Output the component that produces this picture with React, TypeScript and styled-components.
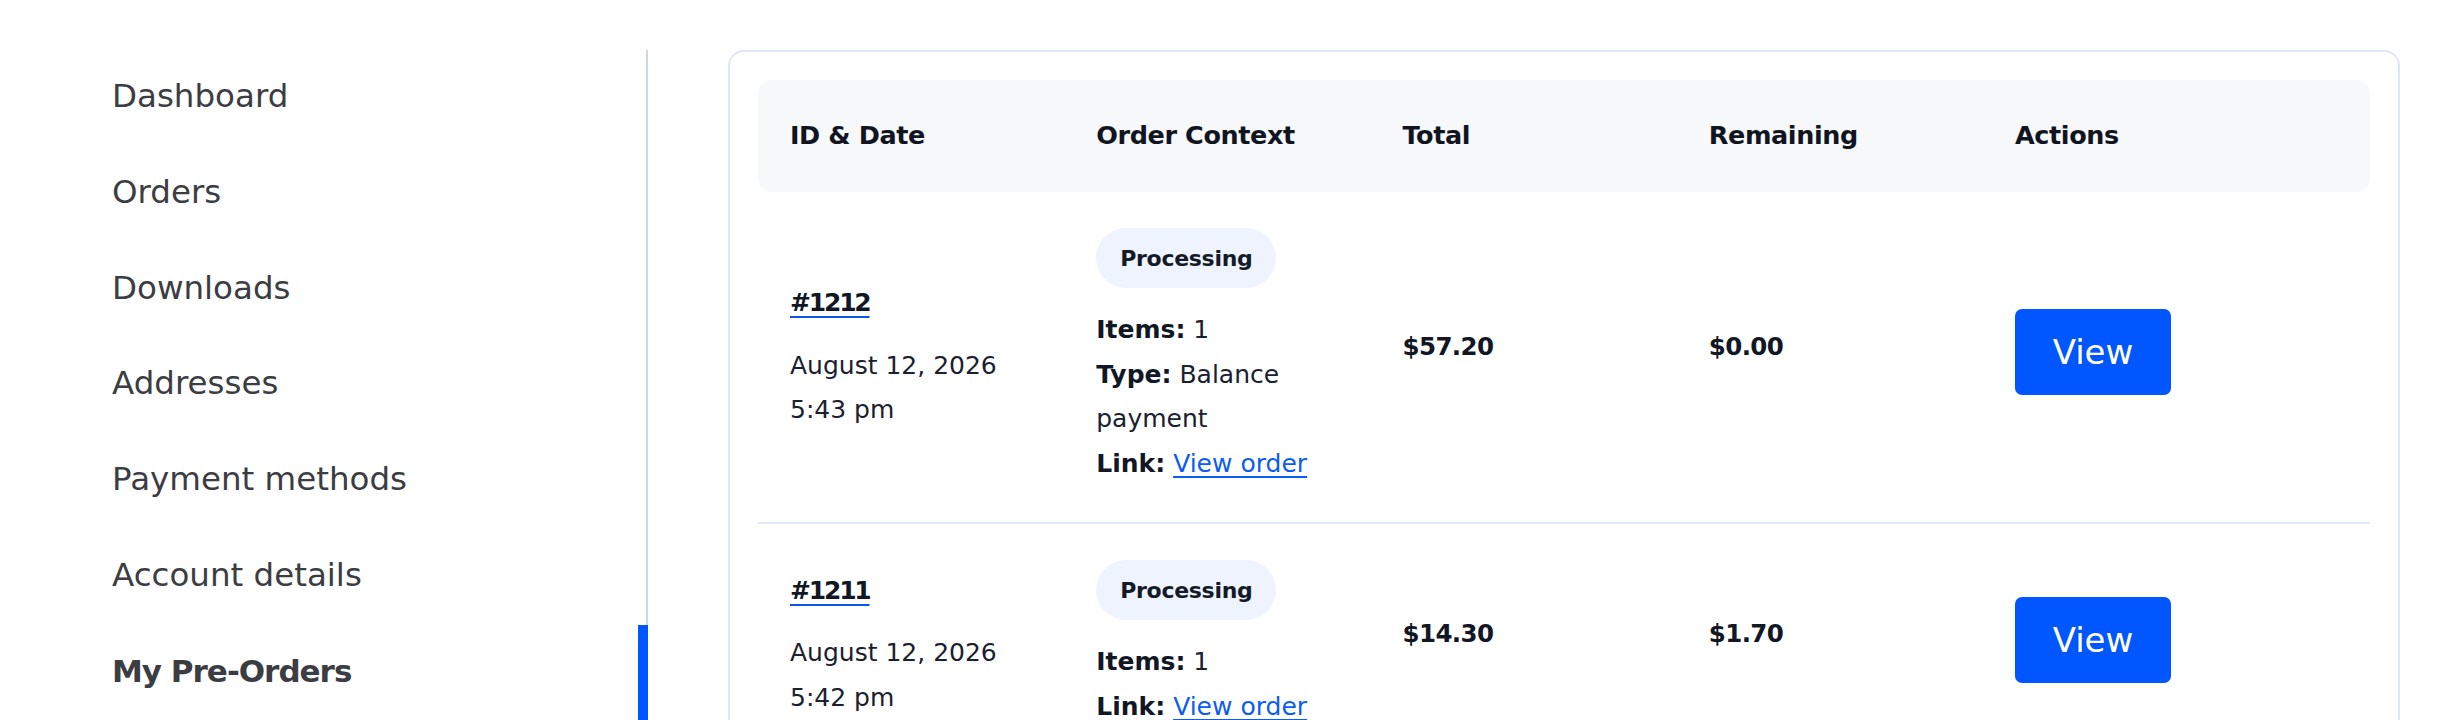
import styled, { createGlobalStyle } from "styled-components";

type PreOrder = {
  id: string;
  date: string;
  time: string;
  items: number;
  type?: [string, string];
  total: string;
  remaining: string;
};

const navItems = [
  "Dashboard",
  "Orders",
  "Downloads",
  "Addresses",
  "Payment methods",
  "Account details",
  "My Pre-Orders",
];

const orders: PreOrder[] = [
  {
    id: "#1212",
    date: "August 12, 2026",
    time: "5:43 pm",
    items: 1,
    type: ["Balance", "payment"],
    total: "$57.20",
    remaining: "$0.00",
  },
  {
    id: "#1211",
    date: "August 12, 2026",
    time: "5:42 pm",
    items: 1,
    total: "$14.30",
    remaining: "$1.70",
  },
];

const GlobalStyle = createGlobalStyle`
  * {
    box-sizing: border-box;
  }
  body {
    margin: 0;
    background: #ffffff;
    font-family: "DejaVu Sans", "Noto Sans", sans-serif;
    color: #151b2b;
  }
`;

const App = (): JSX.Element => {
  return (
    <>
      <GlobalStyle />
      <Page>
        <Sidebar>
          {navItems.map((label) => (
            <NavItem key={label} $active={label === "My Pre-Orders"}>
              {label}
            </NavItem>
          ))}
        </Sidebar>

        <Card>
          <HeaderBand>
            <HeadCell>ID &amp; Date</HeadCell>
            <HeadCell>Order Context</HeadCell>
            <HeadCell>Total</HeadCell>
            <HeadCell>Remaining</HeadCell>
            <HeadCell>Actions</HeadCell>
          </HeaderBand>

          {orders.map((order) => (
            <Row key={order.id}>
              <IdCell>
                <OrderId href="#">{order.id}</OrderId>
                <Line>{order.date}</Line>
                <Line>{order.time}</Line>
              </IdCell>

              <ContextCell>
                <Badge>Processing</Badge>
                <Line>
                  <strong>Items:</strong> {order.items}
                </Line>
                {order.type && (
                  <>
                    <Line>
                      <strong>Type:</strong> {order.type[0]}
                    </Line>
                    <Line>{order.type[1]}</Line>
                  </>
                )}
                <Line>
                  <strong>Link:</strong> <TextLink href="#">View order</TextLink>
                </Line>
              </ContextCell>

              <Amount>{order.total}</Amount>
              <Amount>{order.remaining}</Amount>

              <ActionCell>
                <ViewButton type="button">View</ViewButton>
              </ActionCell>
            </Row>
          ))}
        </Card>
      </Page>
    </>
  );
};

const Page = styled.main`
  display: flex;
  align-items: flex-start;
  padding-top: 50px;
  min-height: 720px;
`;

const Sidebar = styled.nav`
  width: 648px;
  flex-shrink: 0;
  padding-left: 112px;
  border-right: 2px solid #cdd6e3;
  display: flex;
  flex-direction: column;
`;

const NavItem = styled.a<{ $active?: boolean }>`
  position: relative;
  display: block;
  height: 95.8px;
  line-height: 93px;
  font-size: ${(p) => (p.$active ? "31px" : "32.5px")};
  font-weight: ${(p) => (p.$active ? 700 : 400)};
  letter-spacing: ${(p) => (p.$active ? "-1px" : "0")};
  color: #3b3d42;
  text-decoration: none;
  cursor: pointer;

  &::after {
    content: "";
    display: ${(p) => (p.$active ? "block" : "none")};
    position: absolute;
    top: 0;
    bottom: -4px;
    right: -2px;
    width: 10px;
    background: #0057ff;
  }
`;

const Card = styled.section`
  margin-left: 80px;
  width: 1672px;
  flex-shrink: 0;
  border: 2px solid #dde7fa;
  border-radius: 16px;
  padding: 28px 28px 40px;
`;

const columns = `
  display: grid;
  grid-template-columns: repeat(4, 306.25px) 1fr;
  padding: 0 32px;
`;

const HeaderBand = styled.div`
  ${columns};
  height: 112px;
  align-items: center;
  background: #f6f8fa;
  border-radius: 14px;
`;

const HeadCell = styled.div`
  font-size: 25.5px;
  font-weight: 700;
  color: #111522;
  letter-spacing: -0.4px;
  padding-bottom: 2px;
`;

const Row = styled.div`
  ${columns};
  align-items: center;
  padding-top: 36px;
  padding-bottom: 36px;
  border-bottom: 2px solid #dfe9fa;
`;

const Line = styled.div`
  font-size: 25px;
  line-height: 44.5px;
  color: #1b2030;

  strong {
    font-weight: 700;
    color: #121726;
  }
`;

const IdCell = styled.div`
  display: flex;
  flex-direction: column;
  padding-right: 16px;
`;

const OrderId = styled.a`
  align-self: flex-start;
  font-size: 25px;
  line-height: 44.5px;
  font-weight: 700;
  letter-spacing: -2.2px;
  color: #121726;
  margin-bottom: 18px;
  text-decoration: underline;
  text-decoration-color: #0a57e6;
  text-decoration-thickness: 2px;
  text-underline-offset: 5px;
`;

const ContextCell = styled.div`
  display: flex;
  flex-direction: column;
  align-items: flex-start;
  align-self: start;
  padding-right: 16px;
`;

const Badge = styled.span`
  display: inline-flex;
  align-items: center;
  height: 60px;
  padding: 0 24px;
  margin-bottom: 20px;
  border-radius: 30px;
  background: #eef3fd;
  font-size: 22px;
  font-weight: 700;
  letter-spacing: -0.3px;
  color: #141a28;
`;

const TextLink = styled.a`
  color: #0b5cf5;
  text-decoration: underline;
  text-decoration-thickness: 2px;
  text-underline-offset: 4px;
`;

const Amount = styled.div`
  font-size: 24.5px;
  line-height: 44.5px;
  font-weight: 700;
  letter-spacing: -0.6px;
  color: #121726;
  margin-bottom: 20px;
`;

const ActionCell = styled.div`
  display: flex;
  margin-bottom: 10px;
`;

const ViewButton = styled.button`
  width: 156px;
  height: 86px;
  display: flex;
  align-items: center;
  justify-content: center;
  border: none;
  border-radius: 7px;
  background: #0057ff;
  color: #ffffff;
  font-family: "DejaVu Sans", "Noto Sans", sans-serif;
  font-size: 34px;
  font-weight: 400;
  cursor: pointer;
`;

export default App;
